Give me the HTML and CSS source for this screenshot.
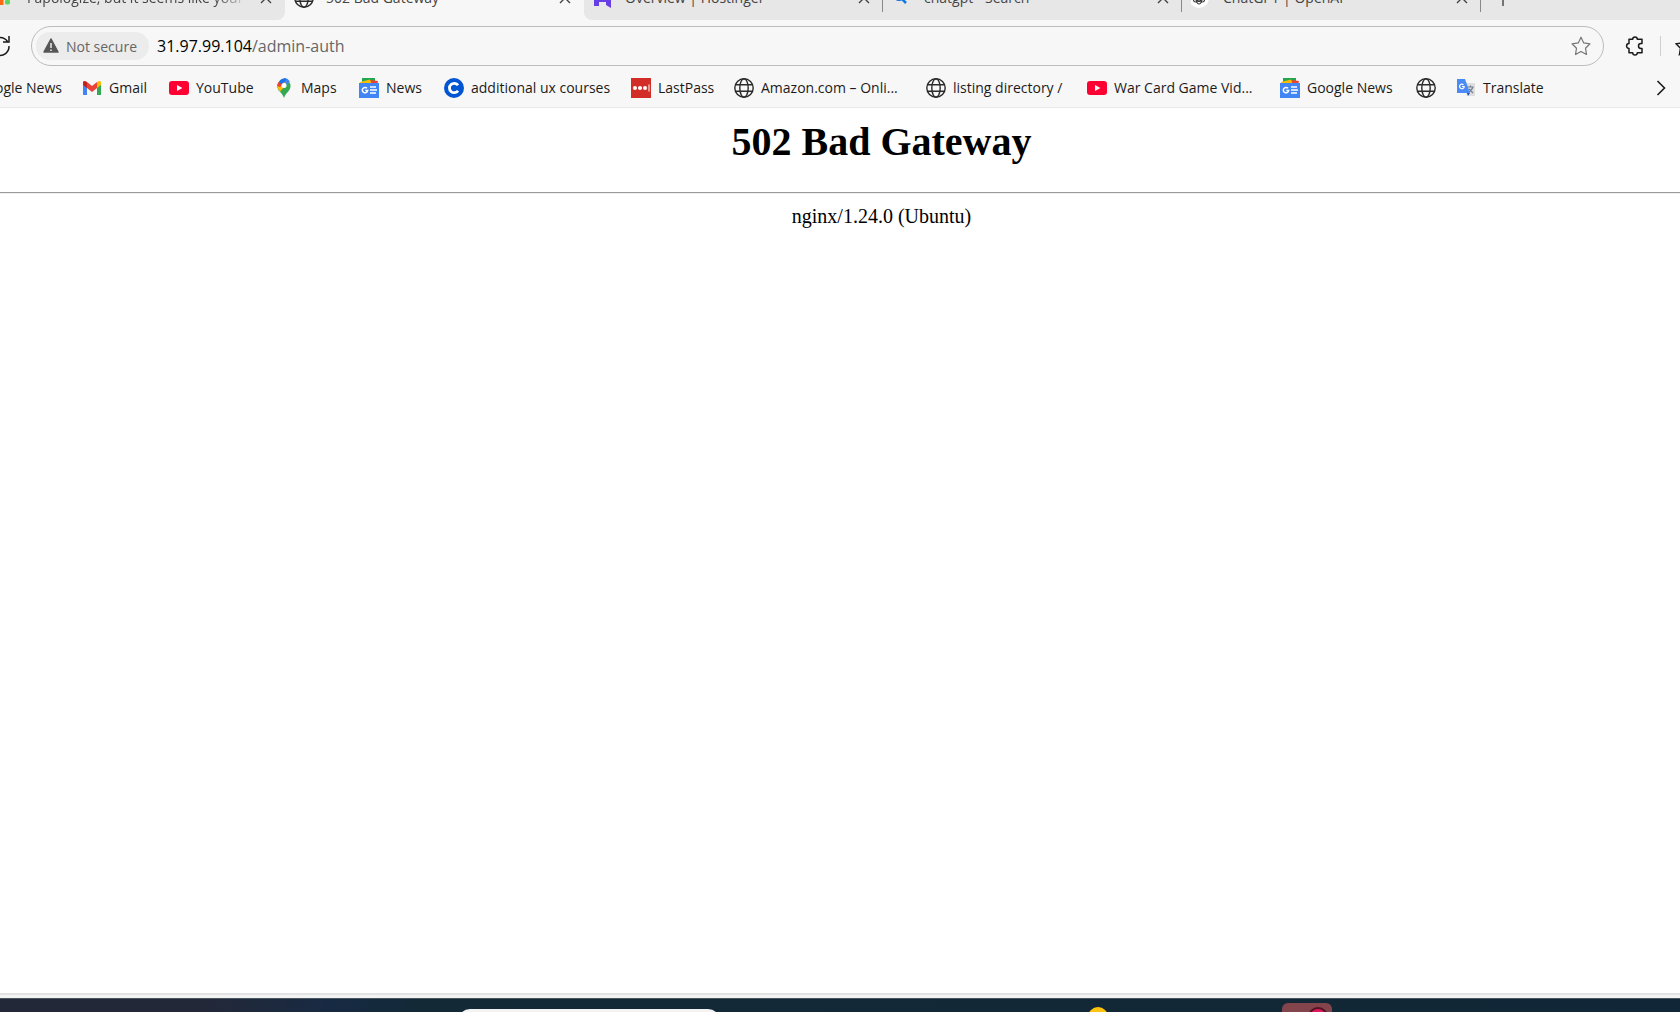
FILE: index.html
```html
<!DOCTYPE html>
<html lang="en">
<head>
<meta charset="utf-8">
<title>502 Bad Gateway</title>
<link rel="stylesheet" href="styles.css">
</head>
<body>
<svg class="defs" aria-hidden="true">
  <symbol id="globe" viewBox="0 0 20 20"><g fill="none" stroke="currentColor" stroke-width="1.4"><circle cx="10" cy="10" r="9.2"/><ellipse cx="10" cy="10" rx="4.2" ry="9.2"/><path d="M1.6 6.8h16.8M1.6 13.2h16.8"/></g></symbol>
  <symbol id="close" viewBox="0 0 12 12"><path d="M1 1l10 10M11 1L1 11" fill="none" stroke="currentColor" stroke-width="1.4"/></symbol>
  <symbol id="youtube" viewBox="0 0 20 20"><rect y="3" width="20" height="14" rx="3" fill="#ff0033"/><path d="M8 7l5.4 3L8 13z" fill="#fff"/></symbol>
  <symbol id="gnews" viewBox="0 0 20 20"><path d="M3 0h13v5H3z" fill="#22a64f"/><path d="M11 2l8 1-1 4h-8z" fill="#ea4335"/><path d="M1 4l10-2.500L13 7H2z" fill="#fbbc04"/><path d="M0 5h20v15H0z" fill="#4285f4"/><path d="M8 10.300A2.700 2.700 0 1 0 8.700 12.500H6.300" fill="none" stroke="#fff" stroke-width="1.500"/><path d="M11 9h6M11 12h7M11 15h6" stroke="#fff" stroke-width="1.500"/></symbol>
</svg>
<header class="browser">
  <nav class="tabs" aria-label="Tabs">
    <div class="tab before-active"><svg class="icon" viewBox="0 0 20 20"><path d="M0 9h8.500v8H0z" fill="#ff6a13"/><circle cx="12.500" cy="14" r="2.600" fill="#5bd65b"/></svg><span class="tab-title fade">I apologize, but it seems like your message</span><button class="close" aria-label="Close tab"><svg><use href="#close"/></svg></button></div>
    <div class="tab active"><svg class="icon globe"><use href="#globe"/></svg><span class="tab-title">502 Bad Gateway</span><button class="close" aria-label="Close tab"><svg><use href="#close"/></svg></button></div>
    <div class="tab after-active ruled"><svg class="icon" viewBox="0 0 20 20"><path d="M1 1l5 2v5h7V3l5 2v15l-5-3v-3H6v4H1z" fill="#673de6"/></svg><span class="tab-title">Overview | Hostinger</span><button class="close" aria-label="Close tab"><svg><use href="#close"/></svg></button></div>
    <div class="tab ruled"><svg class="icon" viewBox="0 0 20 20"><circle cx="7" cy="7" r="5" fill="none" stroke="#0f6cd6" stroke-width="2"/><path d="M9 10l5 5" stroke="#0f78e0" stroke-width="2.500"/></svg><span class="tab-title">chatgpt - Search</span><button class="close" aria-label="Close tab"><svg><use href="#close"/></svg></button></div>
    <div class="tab ruled"><svg class="icon" viewBox="0 0 20 20"><circle cx="8" cy="10" r="10" fill="#fff"/><g fill="none" stroke="#333" stroke-width="1.200"><ellipse cx="8" cy="10" rx="3" ry="6"/><ellipse cx="8" cy="10" rx="3" ry="6" transform="rotate(60 8 10)"/><ellipse cx="8" cy="10" rx="3" ry="6" transform="rotate(120 8 10)"/></g></svg><span class="tab-title">ChatGPT | OpenAI</span><button class="close" aria-label="Close tab"><svg><use href="#close"/></svg></button></div>
    <button class="new-tab" aria-label="New tab"><svg viewBox="0 0 16 16"><path d="M8 0v16M0 8h16" stroke="#444" stroke-width="1.400"/></svg></button>
  </nav>
  <div class="toolbar">
    <button class="reload" aria-label="Reload"><svg viewBox="0 0 22 22"><path d="M18.500 6.500A9 9 0 1 0 20 11M20 1v6h-6" fill="none" stroke="#1b1b1b" stroke-width="1.500"/></svg></button>
    <div class="address">
      <button class="security"><svg viewBox="0 0 16 16"><path d="M8 1l7 13H1z" fill="#555" stroke="#555" stroke-width="1.500" stroke-linejoin="round"/><path d="M8 5v5M8 11.500v1.500" stroke="#ececec" stroke-width="1.500"/></svg>Not secure</button>
      <a class="url" href="#">31.97.99.104<span>/admin-auth</span></a>
      <button class="star" aria-label="Add to favorites"><svg viewBox="0 0 20 20"><path d="M10 1.200l2.700 5.700 6.300.9-4.500 4.400 1 6.300L10 15.500l-5.500 3 1-6.300L1 7.800l6.300-.9z" fill="none" stroke="#777" stroke-width="1.200" stroke-linejoin="round"/></svg></button>
    </div>
    <button class="extensions" aria-label="Extensions"><svg viewBox="0 0 20 20"><path d="M4 3.200h3.700a2.300 2.300 0 0 1 4.600 0H17v4.300h-1a2.500 2.500 0 0 0 0 5h1v4.300h-4.700a2.300 2.300 0 0 1-4.600 0H4v-4.400a2.400 2.400 0 0 1 0-4.800z" fill="none" stroke="#1b1b1b" stroke-width="1.500" stroke-linejoin="round"/></svg></button>
    <span class="divider"></span>
    <button class="favorites" aria-label="Favorites"><svg viewBox="0 0 20 20"><path d="M10 1.200l2.700 5.700 6.300.9-4.500 4.400 1 6.300L10 15.500l-5.500 3 1-6.300L1 7.800l6.300-.9z" fill="none" stroke="#1b1b1b" stroke-width="1.500"/></svg></button>
  </div>
  <nav class="bookmarks" aria-label="Favorites bar">
    <a class="first" href="#">Google News</a>
    <a href="#"><svg viewBox="0 0 20 20"><path d="M1 5v12h4V8z" fill="#4285f4"/><path d="M15 8v9h4V5z" fill="#34a853"/><path d="M15 5v5l4-3V4.500C19 2.500 17 2.500 15 4z" fill="#fbbc04"/><path d="M5 4v6l5 4 5-4V4l-5 4z" fill="#ea4335"/><path d="M5 4v6L1 7V4.500C1 2.500 3 2.500 5 4z" fill="#c5221f"/></svg>Gmail</a>
    <a href="#"><svg><use href="#youtube"/></svg>YouTube</a>
    <a href="#"><svg viewBox="0 0 20 20"><path d="M3.500 8a6.500 6.500 0 0 1 13 0c0 5-4.500 6-6.500 12C8 14 3.500 13 3.500 8z" fill="#34a853"/><path d="M3.500 8L10 0a6.500 6.500 0 0 1 5.800 4L5 13C4 11.500 3.500 10 3.500 8z" fill="#4285f4"/><path d="M3.500 8c0-2 .5-3 1.500-4.200L8.500 7z" fill="#ea4335"/><path d="M3.500 8c0 2.500 1 4 2.500 5.700L12.500 6 10 4z" fill="#fbbc04"/><path d="M3.500 8c0-2 .5-3 1.500-4.200L8.500 7 6 9z" fill="#ea4335"/><path d="M5 3.800l3 3L12.500 1A6.500 6.500 0 0 0 5 3.800z" fill="#1a73e8"/><circle cx="10" cy="7.500" r="2.500" fill="#fff"/></svg>Maps</a>
    <a href="#"><svg><use href="#gnews"/></svg>News</a>
    <a href="#"><svg viewBox="0 0 20 20"><circle cx="10" cy="10" r="10" fill="#0056d2"/><path d="M14 7.300A4.700 4.700 0 1 0 14 12.700" fill="none" stroke="#fff" stroke-width="2.800"/></svg>additional ux courses</a>
    <a href="#"><svg viewBox="0 0 20 20"><path d="M0 0h20v20H0z" fill="#d32d27"/><g fill="#fff"><circle cx="4" cy="10" r="2"/><circle cx="9" cy="10" r="2"/><circle cx="14" cy="10" r="2"/><path d="M17.500 6.500h1v7h-1z"/></g></svg>LastPass</a>
    <a href="#"><svg class="globe"><use href="#globe"/></svg>Amazon.com – Onli...</a>
    <a href="#"><svg class="globe"><use href="#globe"/></svg>listing directory /</a>
    <a href="#"><svg><use href="#youtube"/></svg>War Card Game Vid...</a>
    <a href="#"><svg><use href="#gnews"/></svg>Google News</a>
    <a href="#" aria-label="Website"><svg class="globe"><use href="#globe"/></svg></a>
    <a href="#"><svg viewBox="0 0 20 20"><path d="M8 5h11v13H11z" fill="#dedede"/><path d="M11.500 9h6M14.500 7.500V9M17 9c-1 3-2.500 4-4 5M13 11l4 4" fill="none" stroke="#6d7f91" stroke-width="1.200"/><path d="M1 1h8l5 14H1z" fill="#4c8bf5"/><path d="M11 15h3l-2 3z" fill="#2549b8"/><path d="M7.500 6.800A2.300 2.300 0 1 0 8.200 8.500H6" fill="none" stroke="#fff" stroke-width="1.200"/></svg>Translate</a>
    <button class="more" aria-label="More favorites"><svg viewBox="0 0 10 16"><path d="M1.500 1l7 7-7 7" fill="none" stroke="#1b1b1b" stroke-width="1.600"/></svg></button>
  </nav>
</header>
<main class="page">
  <h1>502 Bad Gateway</h1>
  <hr>
  <p>nginx/1.24.0 (Ubuntu)</p>
</main>
<div class="window-edge"></div>
<footer class="taskbar">
  <div class="search"></div>
  <svg class="yellow" viewBox="0 0 20 20"><circle cx="10" cy="10" r="10" fill="#ffc40d"/></svg>
  <div class="running"><svg viewBox="0 0 20 20"><circle cx="10" cy="10" r="9" fill="#e0185c" stroke="#501425" stroke-width="2"/></svg></div>
</footer>
</body>
</html>
```
FILE: styles.css
```css
* { box-sizing: border-box; }
body {
  margin: 0;
  height: 100vh;
  display: flex;
  flex-direction: column;
  overflow: hidden;
  background: #fff;
  font-family: "Open Sans", sans-serif;
  font-size: 14px;
  color: #1b1b1b;
}
svg { display: block; flex: none; }
button { border: 0; padding: 0; background: none; font: inherit; color: inherit; flex: none; }
a { color: inherit; text-decoration: none; }
.defs { position: absolute; width: 0; height: 0; }
.browser { background: #f7f7f7; border-bottom: 1px solid #e9e9e9; }

.tabs { height: 20px; display: flex; align-items: flex-end; overflow: hidden; }
.tab {
  flex: none;
  width: 299px;
  height: 44px;
  padding: 0 13px 0 9px;
  display: flex;
  align-items: center;
  gap: 12px;
  background: #e7e7e7;
  color: #444;
}
.tab .icon { width: 20px; height: 20px; }
.tab-title { flex: 1; white-space: nowrap; overflow: hidden; line-height: 20px; }
.fade { -webkit-mask-image: linear-gradient(90deg, #000 85%, transparent); mask-image: linear-gradient(90deg, #000 85%, transparent); }
.close svg { width: 12px; height: 12px; }
.before-active { margin-left: -14px; border-bottom-right-radius: 8px; }
.active { background: #f7f7f7; }
.after-active { border-bottom-left-radius: 8px; }
.ruled { background: linear-gradient(#888, #888) right 0 top 0 / 1px 36px no-repeat #e7e7e7; }
.new-tab { flex: 1; height: 44px; padding-left: 14px; background: #e7e7e7; }
.new-tab svg { width: 16px; height: 16px; }

.toolbar { display: flex; align-items: center; padding-top: 6px; overflow: hidden; }
.reload { width: 31px; display: flex; justify-content: flex-end; padding-right: 20px; }
.reload svg { width: 22px; height: 22px; }
.address {
  flex: 1;
  height: 40px;
  display: flex;
  align-items: center;
  padding: 0 12px 0 4px;
  border: 1px solid #bcbcbc;
  border-radius: 20px;
}
.security {
  height: 28px;
  width: 113px;
  padding-left: 7px;
  display: flex;
  align-items: center;
  gap: 7px;
  border-radius: 14px;
  background: #ececec;
  color: #666;
  font-weight: 500;
}
.security svg { width: 16px; height: 16px; }
.url { flex: 1; margin-left: 8px; font-size: 16px; color: #000; }
.url span { color: #666; }
.star svg, .extensions svg, .favorites svg { width: 20px; height: 20px; }
.extensions { margin-left: 21px; }
.divider { width: 1px; height: 20px; margin-left: 15px; background: #cfcfcf; }
.favorites { width: 20px; margin: 0 -15px 0 14px; }

.bookmarks {
  height: 41px;
  display: grid;
  grid-template-columns: 82px 87px 105px 85px 85px 187px 103px 192px 161px 193px 136px 40px 1fr auto;
  align-items: center;
  padding-top: 2px;
  padding-right: 14px;
}
.bookmarks a { display: flex; align-items: center; gap: 7px; line-height: 20px; white-space: nowrap; }
.bookmarks .first { justify-content: flex-end; padding-right: 20px; }
.bookmarks a svg { width: 20px; height: 20px; }
.more svg { width: 10px; height: 16px; }
.globe { color: #2b2b2b; }

.page { flex: 1; padding-left: 83px; font: 20px "Liberation Serif", serif; text-align: center; color: #000; }
.page h1 { margin: 11px 0 27px; font-size: 40px; line-height: 46px; }
.page hr { height: 2px; margin: 0 0 10px -83px; border: 0; border-top: 1px solid #9a9a9a; border-bottom: 1px solid #eee; }
.page p { margin: 0; line-height: 24px; }

.window-edge { height: 5px; border-top: 2px solid #e2e2e2; background: #f3f3f3; }
.taskbar {
  height: 14px;
  display: flex;
  align-items: flex-start;
  overflow: hidden;
  border-top: 1px solid #48565f;
  background: linear-gradient(90deg, #232838 0, #232838 12%, #172a43 20%, #132936 25%, #112737 100%);
}
.search { width: 262px; height: 40px; margin: 10px 0 0 458px; border-radius: 12px; background: #f3f3f3; flex: none; }
.yellow { width: 20px; height: 20px; margin: 8px 0 0 368px; }
.running { width: 50px; height: 50px; margin: 4px 0 0 174px; padding: 4px 0 0 26px; border-radius: 6px; background: #83454b; flex: none; }
.running svg { width: 20px; height: 20px; }
```
